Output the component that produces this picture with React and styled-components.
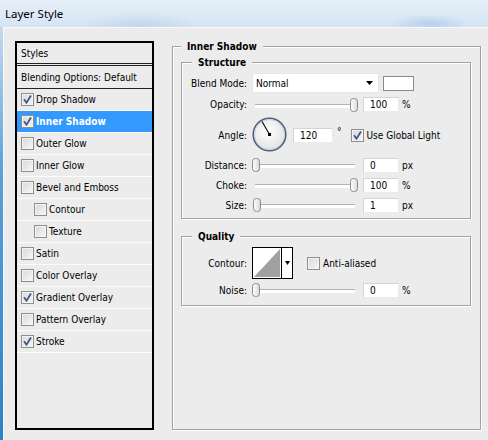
import styled, { createGlobalStyle } from "styled-components";

const GlobalStyle = createGlobalStyle`
  html, body {
    margin: 0;
    padding: 0;
  }
  body {
    background: #ececec;
    font-family: "DejaVu Sans Condensed", "DejaVu Sans", "Liberation Sans", sans-serif;
    font-stretch: condensed;
    font-size: 10px;
    color: #000;
  }
  * {
    box-sizing: border-box;
  }
`;

const Window = styled.div`
  width: 488px;
  height: 440px;
  display: flex;
  flex-direction: column;
  overflow: hidden;
`;

const TitleBar = styled.div`
  height: 27px;
  flex: none;
  display: flex;
  align-items: center;
  padding: 0 5px 1px;
  font-family: "Noto Sans", "Open Sans", sans-serif;
  font-stretch: normal;
  font-size: 11.5px;
  background:
    radial-gradient(ellipse 60px 14px at 140px 26px, rgba(170, 195, 225, 0.45), transparent),
    radial-gradient(ellipse 40px 10px at 430px 24px, rgba(120, 170, 220, 0.35), transparent),
    linear-gradient(to bottom, #e6eff9, #d5e4f4);
`;

const Body = styled.div`
  flex: 1;
  display: flex;
  gap: 18px;
  padding: 13px 7px 10px 12px;
  border-left: 3px solid;
  border-image: linear-gradient(to bottom, #c6daef, #5aa0d8 35%, #2d82c9) 1;
  background: #ececec;
  box-shadow: inset 1px 1px 0 #f9f9f9;
`;

/* ---------- left column ---------- */

const StyleList = styled.div`
  width: 139px;
  flex: none;
  margin-top: 1px;
  border: 2px solid #000;
  display: flex;
  flex-direction: column;
`;

const ListHeader = styled.div`
  height: 23px;
  padding-left: 4px;
  display: flex;
  align-items: center;
  border-bottom: 3px double #222;
`;

const BlendRow = styled.div`
  height: 23px;
  padding-left: 4px;
  display: flex;
  align-items: center;
  border-bottom: 1px solid #222;
`;

const Item = styled.div`
  height: 22px;
  display: flex;
  align-items: center;
  gap: 2px;
  padding-left: ${(p) => (p.$indent ? 17 : 4)}px;
  border-bottom: 1px solid #fbfbfb;
  background: ${(p) => (p.$active ? "#3399ff" : "transparent")};
  color: ${(p) => (p.$active ? "#fff" : "#000")};
  font-weight: ${(p) => (p.$active ? "bold" : "normal")};
`;

const Box = styled.span`
  width: 13px;
  height: 13px;
  flex: none;
  display: inline-flex;
  align-items: center;
  justify-content: center;
  border: 1px solid #8e8f8f;
  background: linear-gradient(135deg, #d8d8d8, #f7f7f7);
  box-shadow: inset 0 0 0 1px #f4f4f4;
`;

const CheckBox = ({ checked }) => (
  <Box>
    {checked && (
      <svg width="11" height="11" viewBox="0 0 11 11">
        <path d="M2 5.3 L4.5 8.7 L9 1.6" fill="none" stroke="#42568a" strokeWidth="1.8" />
      </svg>
    )}
  </Box>
);

/* ---------- right column ---------- */

const Group = styled.fieldset`
  margin: 0;
  min-width: 0;
  padding: ${(p) => p.$pad || "0"};
  border: 1px solid #a3a3a3;
  box-shadow: inset 1px 1px 0 #fff, 1px 1px 0 #fff;
  flex: ${(p) => (p.$grow ? 1 : "none")};
  margin-top: ${(p) => p.$top || 0}px;
`;

const Legend = styled.legend`
  margin-left: ${(p) => p.$offset || 0}px;
  padding: 0 6px;
  font-weight: bold;
  line-height: 13px;
  background: #ececec;
`;

const Row = styled.div`
  height: ${(p) => p.$h}px;
  display: flex;
  align-items: center;
`;

const Label = styled.span`
  width: 65px;
  flex: none;
  margin-right: 5px;
  text-align: right;
`;

const Select = styled.div`
  width: 127px;
  height: 20px;
  display: flex;
  align-items: center;
  justify-content: space-between;
  padding: 0 5px 0 3px;
  background: #fff;
  border: 1px solid #e6e6e6;
`;

const Swatch = styled.div`
  width: 31px;
  height: 15px;
  margin-left: 4px;
  background: #fff;
  border: 1px solid #8b8b8b;
`;

const Slider = styled.div`
  position: relative;
  width: 106px;
  height: 14px;
  flex: none;
  margin-right: 5px;

  &::before {
    content: "";
    position: absolute;
    left: 3px;
    right: 3px;
    top: 6px;
    height: 3px;
    background: #fff;
    border-top: 1px solid #b3b3b3;
  }
`;

const Thumb = styled.svg`
  position: absolute;
  top: 0;
  left: ${(p) => Math.round((p.$value / 100) * 98)}px;
`;

const NumBox = styled.div`
  width: ${(p) => p.$w || 36}px;
  height: 15px;
  flex: none;
  display: flex;
  align-items: center;
  padding-left: 6px;
  margin-left: ${(p) => p.$left || 0}px;
  background: #fff;
  border: 1px solid #eaeaea;
  border-top-color: #d4d4d4;
  border-left-color: #d4d4d4;
`;

const Unit = styled.span`
  margin-left: 3px;
`;

const Degree = styled.span`
  margin: 0 9px 6px 4px;
  line-height: 1;
`;

const CheckLabel = styled.label`
  display: flex;
  align-items: center;
  gap: 3px;
  margin-left: ${(p) => p.$left || 0}px;
`;

const ContourPicker = styled.div`
  width: 41px;
  height: 32px;
  display: flex;
  border: 1px solid #000;
  background: #fff;
`;

const ContourArrow = styled.div`
  width: 11px;
  display: flex;
  align-items: center;
  justify-content: center;
  border-left: 1px solid #000;
`;

const SliderRow = ({ label, value, unit, h = 20 }) => (
  <Row $h={h}>
    <Label>{label}</Label>
    <Slider>
      <Thumb $value={value} width="8" height="14" viewBox="0 0 8 14">
        <defs>
          <linearGradient id="tg" x1="0" y1="0" x2="1" y2="0">
            <stop offset="0" stopColor="#ffffff" />
            <stop offset="1" stopColor="#d9d9d9" />
          </linearGradient>
        </defs>
        <rect x="0.5" y="0.5" width="7" height="13" rx="3" fill="url(#tg)" stroke="#8a8a8a" />
      </Thumb>
    </Slider>
    <NumBox>{value}</NumBox>
    <Unit>{unit}</Unit>
  </Row>
);

const Dial = ({ angle }) => {
  const r = (angle * Math.PI) / 180;
  const x = 17.5 + Math.cos(r) * 15;
  const y = 17.5 - Math.sin(r) * 15;
  return (
    <svg width="36" height="36" viewBox="0 0 36 36">
      <defs>
        <radialGradient id="dg" cx="0.45" cy="0.4" r="0.6">
          <stop offset="0" stopColor="#ffffff" />
          <stop offset="1" stopColor="#e2e2e2" />
        </radialGradient>
      </defs>
      <circle cx="17.5" cy="17.5" r="16.3" fill="url(#dg)" stroke="#4f5f80" strokeWidth="1.6" />
      <circle cx="17.5" cy="17.5" r="15" fill="none" stroke="#c5cad6" strokeWidth="0.8" />
      <line x1="17.5" y1="17.5" x2={x} y2={y} stroke="#000" strokeWidth="1.1" />
      <rect x="16" y="16" width="3" height="3" fill="#000" />
    </svg>
  );
};

const ArrowDown = ({ w = 7 }) => (
  <svg width={w} height="4" viewBox={`0 0 ${w} 4`}>
    <polygon points={`0,0 ${w},0 ${w / 2},4`} fill="#000" />
  </svg>
);

const styles = [
  { name: "Drop Shadow", checked: true },
  { name: "Inner Shadow", checked: true, active: true },
  { name: "Outer Glow" },
  { name: "Inner Glow" },
  { name: "Bevel and Emboss" },
  { name: "Contour", indent: true },
  { name: "Texture", indent: true },
  { name: "Satin" },
  { name: "Color Overlay" },
  { name: "Gradient Overlay", checked: true },
  { name: "Pattern Overlay" },
  { name: "Stroke", checked: true },
];

export default function App() {
  return (
    <>
      <GlobalStyle />
      <Window>
        <TitleBar>Layer Style</TitleBar>
        <Body>
          <StyleList>
            <ListHeader>Styles</ListHeader>
            <BlendRow>Blending Options: Default</BlendRow>
            {styles.map((s) => (
              <Item key={s.name} $indent={s.indent} $active={s.active}>
                <CheckBox checked={s.checked} />
                {s.name}
              </Item>
            ))}
          </StyleList>

          <Group $grow $pad="3px 9px 0 8px">
            <Legend>Inner Shadow</Legend>

            <Group $pad="3px 0 3px 0">
              <Legend $offset={10}>Structure</Legend>
              <Row $h={22}>
                <Label>Blend Mode:</Label>
                <Select>
                  Normal
                  <ArrowDown />
                </Select>
                <Swatch />
              </Row>
              <SliderRow label="Opacity:" value={100} unit="%" h={21} />
              <Row $h={40}>
                <Label>Angle:</Label>
                <Dial angle={120} />
                <NumBox $w={40} $left={5}>120</NumBox>
                <Degree>°</Degree>
                <CheckLabel>
                  <CheckBox checked />
                  Use Global Light
                </CheckLabel>
              </Row>
              <SliderRow label="Distance:" value={0} unit="px" />
              <SliderRow label="Choke:" value={100} unit="%" />
              <SliderRow label="Size:" value={1} unit="px" />
            </Group>

            <Group $pad="3px 0 5px 0" $top={11}>
              <Legend $offset={10}>Quality</Legend>
              <Row $h={34}>
                <Label>Contour:</Label>
                <ContourPicker>
                  <svg width="28" height="30" viewBox="0 0 28 30">
                    <polygon points="1,29 27,1 27,29" fill="#a0a0a0" />
                  </svg>
                  <ContourArrow>
                    <ArrowDown w={5} />
                  </ContourArrow>
                </ContourPicker>
                <CheckLabel $left={14}>
                  <CheckBox />
                  Anti-aliased
                </CheckLabel>
              </Row>
              <SliderRow label="Noise:" value={0} unit="%" />
            </Group>
          </Group>
        </Body>
      </Window>
    </>
  );
}
